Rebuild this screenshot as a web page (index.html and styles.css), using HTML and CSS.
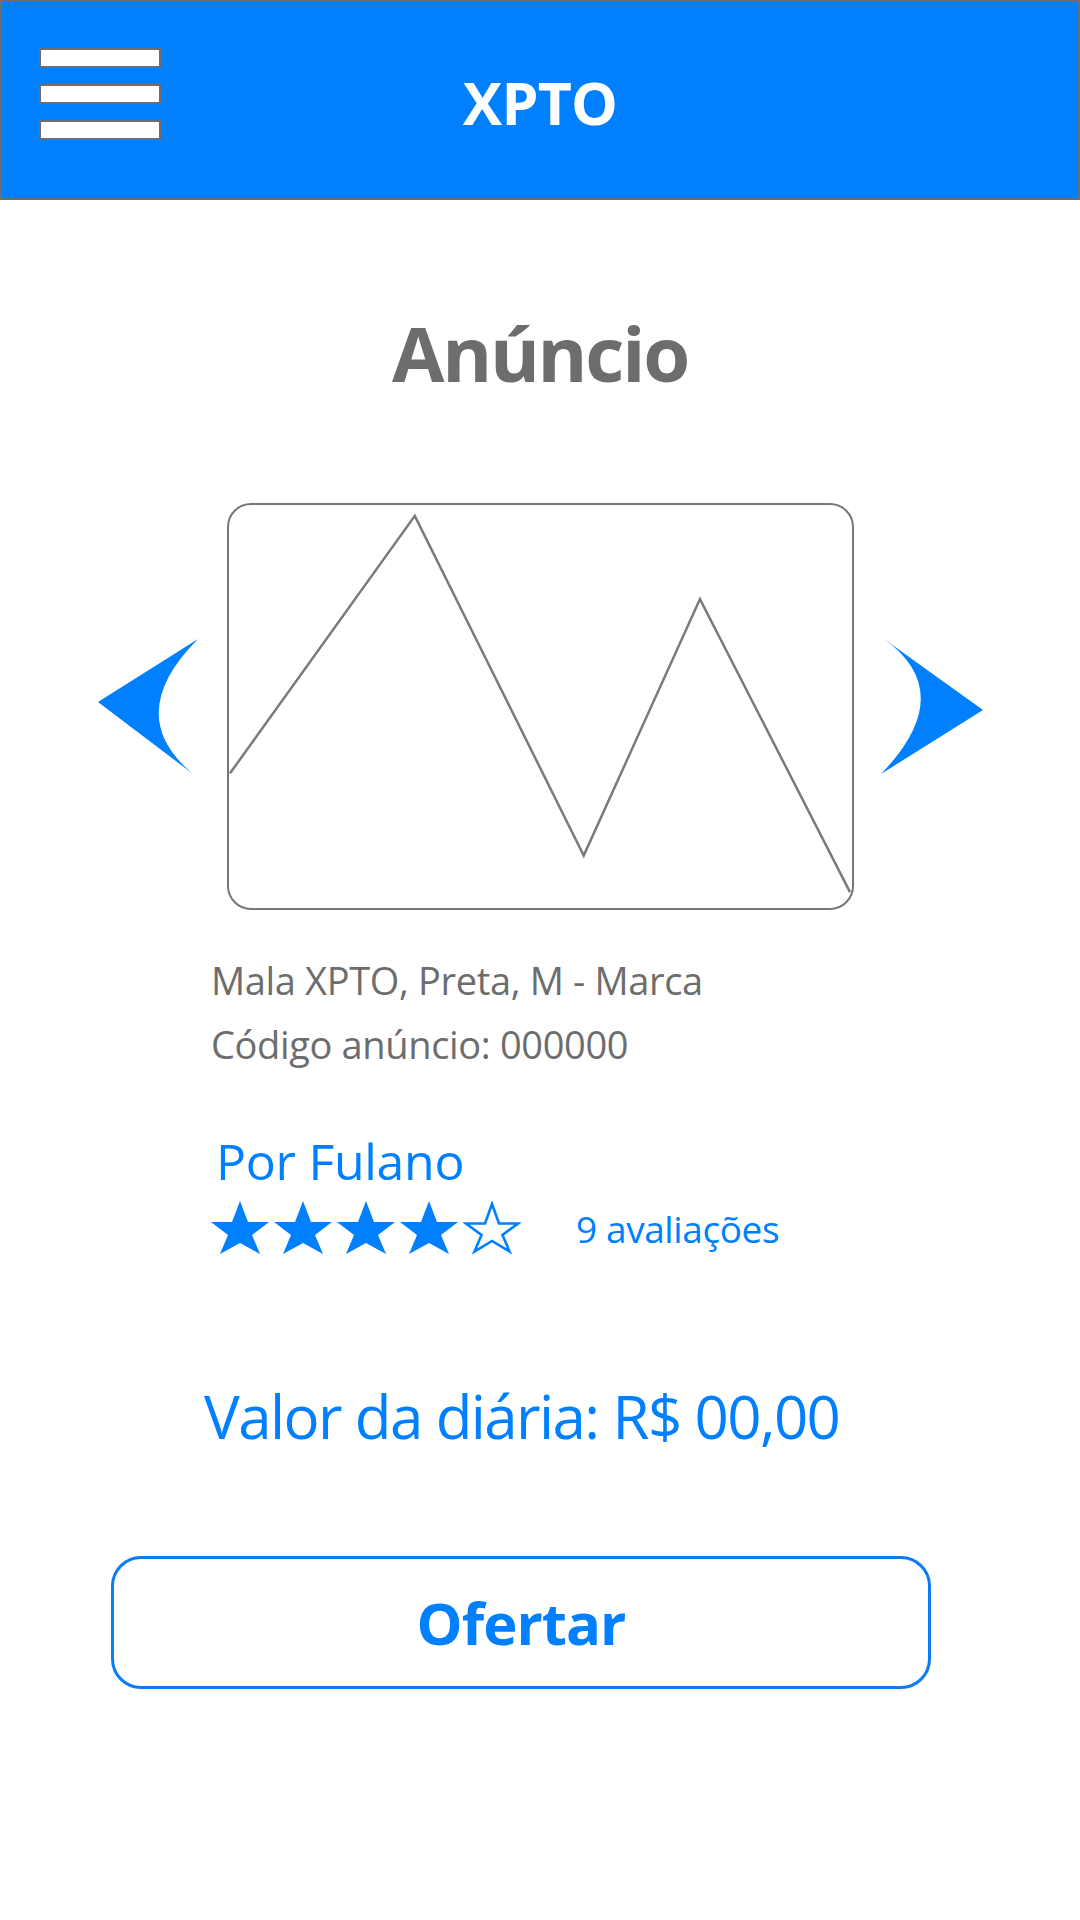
FILE: index.html
```html
<!DOCTYPE html>
<html lang="pt">
<head>
<meta charset="utf-8">
<title>XPTO - Anúncio</title>
<link rel="stylesheet" href="styles.css">
</head>
<body>
<header class="topbar">
  <div class="menu">
    <span class="menu-bar"></span>
    <span class="menu-bar"></span>
    <span class="menu-bar"></span>
  </div>
  <div class="brand">XPTO</div>
  <div class="spacer"></div>
</header>
<main class="content">
  <h1 class="title">Anúncio</h1>
  <section class="carousel">
    <svg class="arrow" width="104" height="140" viewBox="0 0 104 140">
      <path d="M102 2 L2 65 L97 137 Q26 78 102 2 Z" fill="#0080ff"/>
    </svg>
    <div class="photo">
      <svg class="placeholder" viewBox="0 0 627 407" preserveAspectRatio="none">
        <polyline points="1,271 187,11 357,354 474,95 625,391" fill="none" stroke="#7a7a7a" stroke-width="2.5"/>
      </svg>
    </div>
    <svg class="arrow" width="104" height="140" viewBox="0 0 104 140">
      <path d="M3 2 L102 73 L0 137 Q78 56 3 2 Z" fill="#0080ff"/>
    </svg>
  </section>
  <section class="info">
    <p class="line">Mala XPTO, Preta, M - Marca</p>
    <p class="line">Código anúncio: 000000</p>
  </section>
  <section class="seller">
    <p class="seller-name">Por Fulano</p>
    <div class="rating">
      <div class="stars">
        <svg class="star" viewBox="0 0 58 54"><polygon points="29,0 37,21 58,21 41,34 49,53 29,42 9,53 17,34 0,21 21,21" fill="#0080ff"/></svg>
        <svg class="star" viewBox="0 0 58 54"><polygon points="29,0 37,21 58,21 41,34 49,53 29,42 9,53 17,34 0,21 21,21" fill="#0080ff"/></svg>
        <svg class="star" viewBox="0 0 58 54"><polygon points="29,0 37,21 58,21 41,34 49,53 29,42 9,53 17,34 0,21 21,21" fill="#0080ff"/></svg>
        <svg class="star" viewBox="0 0 58 54"><polygon points="29,0 37,21 58,21 41,34 49,53 29,42 9,53 17,34 0,21 21,21" fill="#0080ff"/></svg>
        <svg class="star" viewBox="0 0 58 54"><polygon points="29,3 36,22.5 55,22.5 39.5,34 46.5,50.5 29,40 11.5,50.5 18.5,34 3,22.5 22,22.5" fill="none" stroke="#0080ff" stroke-width="2.6" stroke-linejoin="miter"/></svg>
      </div>
      <span class="reviews">9 avaliações</span>
    </div>
  </section>
  <p class="price">Valor da diária: R$ 00,00</p>
  <div class="actions">
    <button class="offer" type="button">Ofertar</button>
  </div>
</main>
</body>
</html>
```
FILE: styles.css
```css
* { box-sizing: border-box; }
html, body { margin: 0; padding: 0; background: #ffffff; }
body {
  width: 1080px;
  height: 1920px;
  font-family: "Open Sans", "Noto Sans", sans-serif;
  color: #6d6d6d;
}
.topbar {
  height: 200px;
  background: #0080ff;
  border: 2px solid #6d6d6d;
  display: grid;
  grid-template-columns: 1fr auto 1fr;
  align-items: center;
  padding: 0 37px;
}
.menu {
  display: flex;
  flex-direction: column;
  gap: 16px;
  margin-top: -13px;
}
.menu-bar {
  display: block;
  width: 122px;
  height: 20px;
  background: #ffffff;
  border: 2px solid #6d6d6d;
}
.brand {
  color: #ffffff;
  font-weight: 700;
  font-size: 59px;
  letter-spacing: -0.8px;
  line-height: 1;
  padding-top: 4px;
}
.content { display: flex; flex-direction: column; }
.title {
  margin: 0;
  padding-top: 98px;
  text-align: center;
  font-size: 76px;
  font-weight: 700;
  line-height: 110px;
  letter-spacing: -2.2px;
  color: #6d6d6d;
}
.carousel {
  margin-top: 95px;
  display: flex;
  align-items: center;
  justify-content: center;
  gap: 27px;
}
.photo {
  width: 627px;
  height: 407px;
  border: 2.5px solid #777777;
  border-radius: 24px;
  overflow: hidden;
}
.placeholder { display: block; width: 100%; height: 100%; }
.arrow { display: block; }
.info { padding-left: 211px; margin-top: 38px; }
.line {
  margin: 0;
  font-size: 38px;
  line-height: 64px;
  letter-spacing: -0.35px;
  color: #6d6d6d;
}
.seller { padding-left: 211px; margin-top: 55px; }
.seller-name {
  margin: 0 0 0 5px;
  color: #0080ff;
  font-size: 50px;
  line-height: 60px;
  letter-spacing: -0.3px;
}
.rating { display: flex; align-items: center; margin-top: 10px; }
.stars { display: flex; gap: 5px; }
.star { width: 58px; height: 54px; display: block; }
.reviews {
  margin-left: 55px;
  color: #0080ff;
  font-size: 37px;
  letter-spacing: -0.4px;
}
.price {
  margin: 121px 0 0 204px;
  color: #0080ff;
  font-size: 60px;
  line-height: 80px;
  letter-spacing: -1.6px;
}
.actions { padding-left: 111px; margin-top: 100px; }
.offer {
  width: 820px;
  height: 133px;
  background: #ffffff;
  border: 3px solid #0a7cf5;
  border-radius: 30px;
  color: #0080ff;
  font-family: "Open Sans", "Noto Sans", sans-serif;
  font-weight: 700;
  font-size: 58px;
  letter-spacing: -1px;
  cursor: pointer;
}
```
